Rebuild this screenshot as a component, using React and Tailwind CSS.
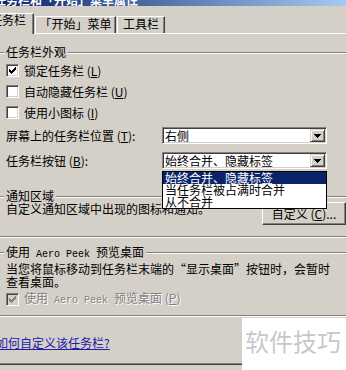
import React from "react";

const F = "font-['Noto_Sans_CJK_SC','Liberation_Sans',sans-serif]";
const MONO = "font-['Liberation_Mono','Noto_Sans_CJK_SC',monospace] text-[10px]";

const CHECK = [
  "......X",
  ".....XX",
  "X...XXX",
  "XX.XXX.",
  "XXXXX..",
  ".XXX...",
  "..X....",
];

function CheckMark({ color }) {
  const rects = [];
  CHECK.forEach((row, y) =>
    row.split("").forEach((c, x) => {
      if (c === "X") rects.push(<rect key={`${x}-${y}`} x={x} y={y} width="1" height="1" />);
    })
  );
  return (
    <svg width="7" height="7" viewBox="0 0 7 7" shapeRendering="crispEdges" fill={color}>
      {rects}
    </svg>
  );
}

function Arrow() {
  return (
    <svg width="7" height="4" viewBox="0 0 7 4" shapeRendering="crispEdges" fill="#000">
      <rect x="0" y="0" width="7" height="1" />
      <rect x="1" y="1" width="5" height="1" />
      <rect x="2" y="2" width="3" height="1" />
      <rect x="3" y="3" width="1" height="1" />
    </svg>
  );
}

function Etch({ className = "" }) {
  return <div className={`h-[2px] border-t border-t-[#808080] border-b border-b-white ${className}`} />;
}

function GroupLabel({ children }) {
  return (
    <div className="flex items-start h-[12px]">
      <Etch className="w-[4px] mt-[6px]" />
      <div className="px-[2px] leading-[12px] whitespace-nowrap">{children}</div>
      <Etch className="flex-1 mt-[6px]" />
    </div>
  );
}

function CheckBox({ checked, disabled }) {
  return (
    <div
      className={`w-[13px] h-[13px] shrink-0 border border-t-[#808080] border-l-[#808080] border-b-white border-r-white shadow-[inset_1px_1px_0_#404040,inset_-1px_-1px_0_#D4D0C8] flex items-center justify-center ${
        disabled ? "bg-[#D4D0C8]" : "bg-white"
      }`}
    >
      {checked && <CheckMark color={disabled ? "#808080" : "#000"} />}
    </div>
  );
}

function CheckRow({ checked, disabled, children }) {
  return (
    <div className="flex items-center h-[13px] gap-[5px]">
      <CheckBox checked={checked} disabled={disabled} />
      <span
        className={`leading-[12px] whitespace-nowrap ${
          disabled ? "text-[#808080] [text-shadow:1px_1px_0_#fff]" : ""
        }`}
      >
        {children}
      </span>
    </div>
  );
}

function Select({ value, children }) {
  return (
    <div className="relative w-[165px] h-[17px] mr-[19px] shrink-0">
      <div className="w-full h-full flex items-center bg-white border border-t-[#808080] border-l-[#808080] border-b-white border-r-white shadow-[inset_1px_1px_0_#404040,inset_-1px_-1px_0_#D4D0C8] pl-[2px] pr-[1px]">
        <span className="flex-1 leading-[12px] whitespace-nowrap overflow-hidden">{value}</span>
        <div className="w-[15px] h-[13px] flex items-center justify-center bg-[#D4D0C8] border border-t-[#D4D0C8] border-l-[#D4D0C8] border-b-[#404040] border-r-[#404040] shadow-[inset_1px_1px_0_#fff,inset_-1px_-1px_0_#808080]">
          <Arrow />
        </div>
      </div>
      {children}
    </div>
  );
}

export default function App() {
  return (
    <div className={`w-[346px] h-[370px] overflow-hidden relative bg-[#D4D0C8] text-black text-[12px] ${F} flex flex-col`}>
      {/* title bar */}
      <div className="h-[6px] shrink-0 overflow-hidden bg-[linear-gradient(to_right,#0A246A,#A6CAF0)] flex items-end">
        <span className="ml-[-6px] leading-[12px] font-bold text-white whitespace-nowrap">任务栏和「开始」菜单属性</span>
      </div>

      {/* tabs */}
      <div className="h-[28px] shrink-0 flex items-end shadow-[inset_0_-1px_0_#fff]">
        <div className="ml-[-20px] w-[54px] h-[21px] shrink-0 bg-[#D4D0C8] border-t border-t-white border-r border-r-[#404040] shadow-[inset_-1px_0_0_#808080] pl-[10px] leading-[12px] whitespace-nowrap">
          任务栏
        </div>
        <div className="ml-[1px] mb-[1px] w-[81px] h-[17px] shrink-0 border-t border-l border-t-white border-l-white border-r border-r-[#404040] shadow-[inset_-1px_0_0_#808080] pt-[1px] text-center leading-[12px] whitespace-nowrap">
          「开始」菜单
        </div>
        <div className="ml-[1px] mb-[1px] w-[48px] h-[17px] shrink-0 border-t border-l border-t-white border-l-white border-r border-r-[#404040] shadow-[inset_-1px_0_0_#808080] pt-[1px] text-center leading-[12px] whitespace-nowrap">
          工具栏
        </div>
      </div>

      {/* group 1 */}
      <div className="mt-[12px]">
        <GroupLabel>任务栏外观</GroupLabel>
      </div>
      <div className="mt-[6px] flex flex-col gap-[8px] pl-[6px]">
        <CheckRow checked>
          锁定任务栏 (<u>L</u>)
        </CheckRow>
        <CheckRow>
          自动隐藏任务栏 (<u>U</u>)
        </CheckRow>
        <CheckRow>
          使用小图标 (<u>I</u>)
        </CheckRow>
      </div>

      <div className="mt-[8px] flex items-center h-[17px] pl-[6px]">
        <span className="flex-1 leading-[12px] whitespace-nowrap">
          屏幕上的任务栏位置 (<u>T</u>):
        </span>
        <Select value="右侧" />
      </div>
      <div className="mt-[8px] flex items-center h-[17px] pl-[6px] relative z-10">
        <span className="flex-1 leading-[12px] whitespace-nowrap">
          任务栏按钮 (<u>B</u>):
        </span>
        <Select value="始终合并、隐藏标签">
          <div className="absolute left-0 top-[19px] w-[165px] bg-white border border-black flex flex-col">
            <div className="h-[12px] leading-[12px] pl-[2px] bg-[#0A246A] text-white whitespace-nowrap">始终合并、隐藏标签</div>
            <div className="h-[12px] leading-[12px] pl-[2px] whitespace-nowrap">当任务栏被占满时合并</div>
            <div className="h-[12px] leading-[12px] pl-[2px] whitespace-nowrap">从不合并</div>
          </div>
        </Select>
      </div>

      {/* group 2 */}
      <div className="mt-[21px]">
        <GroupLabel>通知区域</GroupLabel>
      </div>
      <div className="flex h-[23px]">
        <span className="flex-1 pl-[6px] pt-[1px] leading-[12px] whitespace-nowrap">自定义通知区域中出现的图标和通知。</span>
        <div className="w-[84px] h-[23px] shrink-0 flex items-center justify-center border border-t-white border-l-white border-b-[#404040] border-r-[#404040] shadow-[inset_-1px_-1px_0_#808080] leading-[12px] whitespace-nowrap">
          自定义 (<u>C</u>)...
        </div>
      </div>
      <Etch className="mt-[11px]" />

      {/* group 3 */}
      <div className="mt-[8px]">
        <GroupLabel>
          使用<span className={MONO}> Aero Peek </span>预览桌面
        </GroupLabel>
      </div>
      <div className="mt-[4px] pl-[6px] leading-[13px] whitespace-nowrap">
        当您将鼠标移动到任务栏末端的“显示桌面”按钮时，会暂时
        <br />
        查看桌面。
      </div>
      <div className="mt-[5px] pl-[6px]">
        <CheckRow checked disabled>
          使用<span className={MONO}> Aero Peek </span>预览桌面 (<u>P</u>)
        </CheckRow>
      </div>
      <Etch className="mt-[9px]" />

      <div className="mt-[20px] h-[12px] ml-[-4px] leading-[12px] whitespace-nowrap">
        <span className="text-[#1c1ca8] underline">如何自定义该任务栏?</span>
      </div>
      <div className="mt-[14px] h-[2px] border-t border-t-[#808080] border-b border-b-[#404040]" />

      {/* watermark overlay */}
      <div className="absolute right-0 bottom-0 w-[104px] h-[52px] bg-white pl-[3px] pt-[9px]">
        <span className="text-[24px] leading-[28px] text-[#c8c8c8] whitespace-nowrap">软件技巧</span>
      </div>
    </div>
  );
}
